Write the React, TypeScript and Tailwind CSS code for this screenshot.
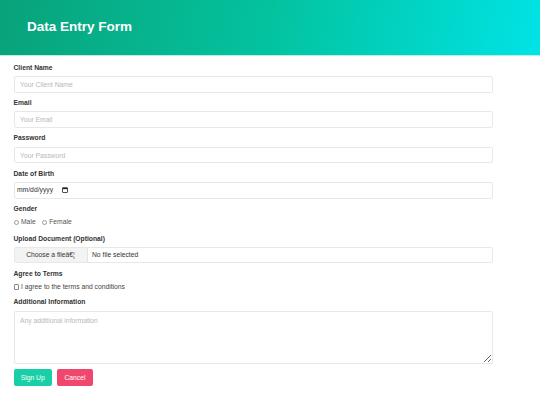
import { useState } from "react";

const label = "block text-[6.75px] leading-[8px] font-bold text-[#333] mb-[4.5px]";
const input =
  "block w-full h-[16.5px] border border-[#e8e8e8] rounded-[2px] px-[5.6px] text-[6.75px] text-[#333] outline-none placeholder:text-[#b8b8b8]";

function Radio({ name, value, checked, onChange }: { name: string; value: string; checked: boolean; onChange: () => void }) {
  return (
    <label className="flex items-center gap-[2px] cursor-pointer" onClick={onChange}>
      <span className="w-[5.5px] h-[5.5px] rounded-full border-[0.8px] border-[#9a9a9a] flex items-center justify-center">
        {checked && <span className="w-[2.5px] h-[2.5px] rounded-full bg-[#333]" />}
      </span>
      <span className="text-[6.75px] text-[#555]">{value}</span>
      <input type="radio" name={name} className="hidden" readOnly checked={checked} />
    </label>
  );
}

export default function App() {
  const [gender, setGender] = useState("");
  const [agree, setAgree] = useState(false);

  return (
    <div className="min-h-screen bg-white font-['Liberation_Sans',Arial,sans-serif]">
      <header className="h-[55px] flex items-center pl-[27px] bg-[linear-gradient(100deg,#09a27a_0%,#03c39f_50%,#00e3e5_100%)] shadow-[0_1px_0_#b5efe5]">
        <h1 className="text-[13.5px] font-bold text-white">Data Entry Form</h1>
      </header>

      <form className="w-[506px] px-[13.5px] pt-[8.5px]" onSubmit={(e) => e.preventDefault()}>
        <div className="mb-[6.4px]">
          <label className={label}>Client Name</label>
          <input className={input} placeholder="Your Client Name" />
        </div>
        <div className="mb-[6.4px]">
          <label className={label}>Email</label>
          <input className={input} placeholder="Your Email" />
        </div>
        <div className="mb-[6.4px]">
          <label className={label}>Password</label>
          <input type="password" className={input} placeholder="Your Password" />
        </div>
        <div className="mb-[6.4px]">
          <label className={label}>Date of Birth</label>
          <div className="flex items-center w-full h-[16.5px] border border-[#e8e8e8] rounded-[2px] pl-[2.5px] text-[6.75px] text-[#333]">
            <span>mm/dd/yyyy</span>
            <svg className="ml-[9px]" width="6" height="6" viewBox="0 0 12 12" fill="none">
              <rect x="1" y="1.5" width="10" height="9.5" rx="1" stroke="#222" strokeWidth="1.6" />
              <rect x="1" y="1.5" width="10" height="2.8" fill="#222" />
            </svg>
          </div>
        </div>
        <div className="mb-[7.5px]">
          <label className={label}>Gender</label>
          <div className="flex items-center gap-[6px] h-[9.5px]">
            <Radio name="gender" value="Male" checked={gender === "Male"} onChange={() => setGender("Male")} />
            <Radio name="gender" value="Female" checked={gender === "Female"} onChange={() => setGender("Female")} />
          </div>
        </div>
        <div className="mb-[6.6px]">
          <label className={label}>Upload Document (Optional)</label>
          <div className="flex items-center w-full h-[16px] border border-[#e8e8e8] rounded-[2px] text-[6.75px] text-[#333] overflow-hidden">
            <span className="h-full w-[73px] flex items-center justify-center bg-[#f3f3f3] border-r border-[#e3e3e3]">
              Choose a fileâ€¦
            </span>
            <span className="pl-[4.5px]">No file selected</span>
          </div>
        </div>
        <div className="mb-[6.1px]">
          <label className={label}>Agree to Terms</label>
          <label className="flex items-center gap-[2px] h-[9.8px] cursor-pointer" onClick={() => setAgree(!agree)}>
            <span className="w-[5.5px] h-[5.5px] border-[0.8px] border-[#888] rounded-[1px] flex items-center justify-center text-[5px] leading-none">
              {agree ? "✓" : ""}
            </span>
            <span className="text-[6.75px] text-[#444]">I agree to the terms and conditions</span>
          </label>
        </div>
        <div className="mb-[5.3px]">
          <label className={label}>Additional Information</label>
          <textarea
            className="block w-full h-[53.5px] border border-[#e8e8e8] rounded-[2px] px-[5.6px] py-[4px] text-[6.75px] text-[#333] outline-none placeholder:text-[#b8b8b8] resize-y"
            placeholder="Any additional information"
          />
        </div>
        <div className="flex gap-[5.3px]">
          <button type="submit" className="h-[16.7px] w-[38.5px] rounded-[2px] bg-[#19cfa7] text-white text-[6.75px]">
            Sign Up
          </button>
          <button type="button" className="h-[16.7px] w-[35.3px] rounded-[2px] bg-[#ef476d] text-white text-[6.75px]">
            Cancel
          </button>
        </div>
      </form>
    </div>
  );
}
